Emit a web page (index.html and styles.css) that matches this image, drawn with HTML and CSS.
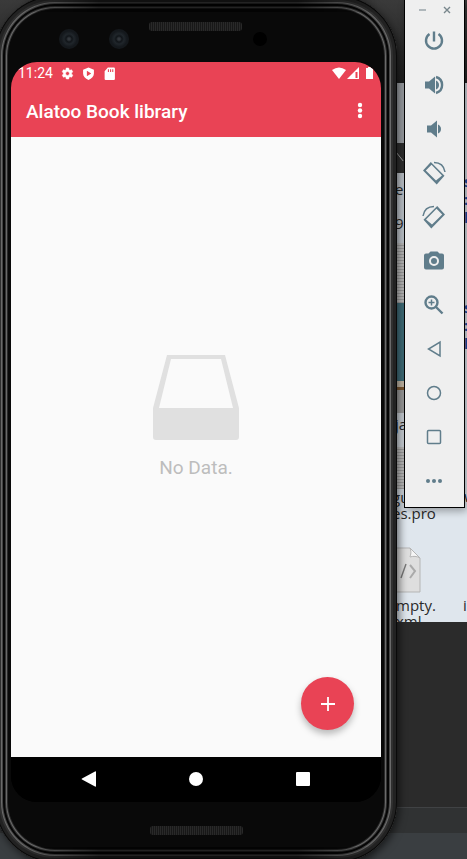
FILE: index.html
```html
<!DOCTYPE html>
<html lang="en">
<head>
<meta charset="utf-8">
<meta name="viewport" content="width=device-width, initial-scale=1">
<title>Alatoo Book library</title>
<link rel="stylesheet" href="styles.css">
</head>
<body>
<div class="desktop">
  <section class="files" aria-label="Files">
    <div class="thumbs">
      <div class="thumb pale"></div>
      <div class="thumb dark"><svg viewBox="0 0 10 30"><path d="M0 10L8 20" stroke="#bbb" fill="none"/></svg></div>
      <div class="thumb names"><span>e</span><span>9</span></div>
      <div class="thumb page"></div>
      <div class="thumb teal"></div>
      <div class="thumb wood"></div>
      <div class="thumb names low"><span>ja</span></div>
      <div class="thumb page"></div>
    </div>
    <p class="name">gu<br>es.pro</p>
    <svg class="doc" viewBox="0 0 28 46"><path d="M0 1H17L27 11V45H0Z" fill="#dedede" stroke="#b5b5b5"/><path d="M17 1C19 6 17 9 17 10C20 9 24 9 27 11Z" fill="#f6f6f6" stroke="#b5b5b5"/><path d="M13 17L8 31" stroke="#777" stroke-width="1.4"/><path d="M17 18L22 24L17 31" fill="none" stroke="#aaa" stroke-width="2"/></svg>
    <p class="name last">mpty.<br>xml</p>
    <div class="edge"><span>s</span><span>:</span><span>l</span></div>
    <div class="edge lower"><span>s</span><span>:</span><span>l</span></div>
    <span class="stray">i</span>
    <span class="stray high">w</span>
  </section>
  <div class="taskbar"></div>
</div>

<main class="phone">
  <div class="body">
    <div class="top">
      <i class="lens"></i><i class="lens"></i><i class="grille"></i><i class="sensor"></i>
    </div>
    <div class="screen">
      <header class="appbar">
        <div class="status">
          <span>11:24</span>
          <svg viewBox="0 0 24 24"><path d="M19.4 13a7 7 0 0 0 0-2l2.1-1.6c.2-.2.3-.5.1-.7l-2-3.400c-.1-.2-.4-.3-.6-.2l-2.500 1a7 7 0 0 0-1.700-1l-.4-2.600a.5.5 0 0 0-.5-.5h-4c-.2 0-.4.2-.5.4L9.100 5.100a8 8 0 0 0-1.600 1L5 5.100c-.3-.1-.5 0-.7.2l-2 3.400c-.1.3 0 .5.200.700L4.600 11a7 7 0 0 0 0 2l-2.100 1.600c-.2.2-.3.5-.1.700l2 3.400c.1.200.4.300.6.200l2.500-1a7 7 0 0 0 1.700 1l.3 2.600c.1.300.3.500.500.500h4c.3 0 .5-.2.500-.4l.4-2.700a8 8 0 0 0 1.700-1l2.500 1c.2.100.500 0 .600-.2l2-3.400c.1-.2.100-.5-.1-.7ZM12 15.600a3.600 3.600 0 1 1 0-7.200 3.600 3.600 0 0 1 0 7.200Z" fill="#fff" stroke="#fff" fill-rule="evenodd"/></svg>
          <svg viewBox="0 0 24 24"><path d="M12 1L2 5V12C2 17 6 21.500 12 24C18 21.500 22 17 22 12V5ZM9 7L17 12L9 17Z" fill="#fff" fill-rule="evenodd"/></svg>
          <svg viewBox="0 0 24 24"><path d="M9 1H20Q22 1 22 3V22Q22 24 20 24H5Q3 24 3 22V8ZM9 4V9H11V4ZM13 4V9H15V4ZM17 4V9H19V4Z" fill="#fff" fill-rule="evenodd"/></svg>
          <svg class="signals" viewBox="0 0 42 14"><path d="M0 4Q7-1 14 4L7 13Z" fill="#fff"/><path d="M27 1V13H15Z" fill="#fff"/><path d="M23.500 6H25.500V12H23.500Z" fill="#e94355"/><path d="M36 1H39V2H41V13H34V2H36Z" fill="#fff"/></svg>
        </div>
        <div class="titlebar">
          <h1>Alatoo Book library</h1>
          <button class="more" aria-label="More options"><svg viewBox="0 0 6 18"><circle cx="3" cy="3" r="2.200"/><circle cx="3" cy="8.500" r="2.200"/><circle cx="3" cy="14" r="2.200"/></svg></button>
        </div>
      </header>
      <div class="content">
        <div class="empty">
          <svg viewBox="0 0 86 86"><path d="M0 54L14 1H72L86 54V83Q86 86 83 86H3Q0 86 0 83ZM6 54H80L68 5H18Z" fill="#e0e0e0" fill-rule="evenodd"/></svg>
          <p>No Data.</p>
        </div>
        <button class="fab" aria-label="Add book"><svg viewBox="0 0 14 14"><path d="M7 0V14M0 7H14" stroke="#fff" stroke-width="1.800"/></svg></button>
      </div>
      <nav class="nav">
        <button aria-label="Back"><svg viewBox="0 0 16 16"><path d="M15 1V15Q15 16 14 15.500L1 8.500Q0 8 1 7.500L14 .5Q15 0 15 1Z"/></svg></button>
        <button aria-label="Home"><svg viewBox="0 0 16 16"><circle cx="8" cy="8" r="7"/></svg></button>
        <button aria-label="Overview"><svg viewBox="0 0 16 16"><rect x="1" y="1" width="14" height="14" rx="1"/></svg></button>
      </nav>
    </div>
    <div class="chin"><i class="grille"></i></div>
  </div>
</main>

<aside class="tools" aria-label="Emulator controls">
  <div class="winbtns">
    <button aria-label="Minimize"><svg viewBox="0 0 10 10"><path d="M1 5H8" stroke="#9aa5aa" stroke-width="1.500"/></svg></button>
    <button aria-label="Close"><svg viewBox="0 0 10 10"><path d="M2 2L8 8M8 2L2 8" stroke="#78868c" stroke-width="1.400"/></svg></button>
  </div>
  <button class="tool" aria-label="Power"><svg viewBox="0 0 24 24"><path class="line" d="M7.500 5A8 8 0 1 0 16.500 5M12 2.500V12.500"/></svg></button>
  <button class="tool" aria-label="Volume up"><svg viewBox="0 0 24 24"><path d="M3 8.500V15.500H7L13 20.500V3.500L7 8.500ZM14 7.500Q17 9 17 12T14 16.500Z"/><path class="line" d="M14 4A8.300 8.300 0 0 1 14 20"/></svg></button>
  <button class="tool" aria-label="Volume down"><svg viewBox="0 0 24 24"><path d="M5 8.500V15.500H9L15 20.500V3.500L9 8.500ZM16 7.500Q19 9 19 12T16 16.500Z"/></svg></button>
  <button class="tool" aria-label="Rotate left"><svg viewBox="0 0 24 24"><path d="M8.800 1L22.500 14.700L14.700 23.500L1 9.500ZM9.500 3.800L3.800 9.500L14 19.500L20 14.500Z" fill-rule="evenodd"/><path class="thin" d="M12 1.500Q21.500 1.500 23 11"/></svg></button>
  <button class="tool" aria-label="Rotate right"><svg viewBox="0 0 24 24"><path d="M15.200 1L1.500 14.700L9.300 23.500L23 9.500ZM14.500 3.800L20.200 9.500L10 19.500L4 14.500Z" fill-rule="evenodd"/><path class="thin" d="M12 1.500Q2.500 1.500 1 11"/></svg></button>
  <button class="tool" aria-label="Take screenshot"><svg viewBox="0 0 24 24"><path d="M8.500 2.500H15.500L17.500 4.500H20Q22 4.500 22 6.500V18.500Q22 20.500 20 20.500H4Q2 20.500 2 18.500V6.500Q2 4.500 4 4.500H6.500ZM12 7A5 5 0 1 0 12 17A5 5 0 1 0 12 7ZM12 9A3 3 0 1 1 12 15A3 3 0 1 1 12 9Z" fill-rule="evenodd"/></svg></button>
  <button class="tool" aria-label="Zoom"><svg viewBox="0 0 24 24"><circle class="line" cx="9.500" cy="9.500" r="6"/><path class="line" d="M14 14L20.500 20.500"/><path class="thin" d="M9.500 6.500V12.500M6.500 9.500H12.500"/></svg></button>
  <button class="tool" aria-label="Back"><svg viewBox="0 0 24 24"><path class="thin" d="M18 5V19L6.500 12Z"/></svg></button>
  <button class="tool" aria-label="Home"><svg viewBox="0 0 24 24"><circle class="thin" cx="12" cy="12" r="6.500"/></svg></button>
  <button class="tool" aria-label="Overview"><svg viewBox="0 0 24 24"><rect class="thin" x="5.500" y="5.500" width="13" height="13" rx="1"/></svg></button>
  <button class="tool" aria-label="More"><svg viewBox="0 0 24 24"><circle cx="6" cy="12" r="2"/><circle cx="12" cy="12" r="2"/><circle cx="18" cy="12" r="2"/></svg></button>
</aside>
</body>
</html>
```
FILE: styles.css
```css
* { box-sizing: border-box; }
body {
  margin: 0;
  min-height: 100vh;
  display: flex;
  align-items: flex-start;
  position: relative;
  overflow: hidden;
  background: #2b2b2b;
  font-family: Roboto, sans-serif;
}
button { border: 0; padding: 0; background: none; display: grid; place-items: center; }
svg { display: block; }
i { display: block; }

/* Desktop behind the windows */
.desktop {
  position: absolute;
  inset: 0;
  display: flex;
  flex-direction: column;
  padding-top: 83px;
  background: linear-gradient(#3a3a3a, #222 83px, #2b2b2b 84px);
}
.files {
  position: relative;
  height: 539px;
  overflow: hidden;
  padding-left: 392px;
  background: linear-gradient(#cbd1d8, #dfe6ed 430px);
  color: #2a2a2a;
  font: 15px/16px "Open Sans", sans-serif;
}
.thumbs { width: 13px; height: 406px; display: grid; grid-template-rows: 60px 30px 70px 60px 78px 32px 34px 42px; }
.thumb { overflow: hidden; }
.thumb.pale { background: #a9adb2; }
.thumb.dark { background: #333; padding-left: 4px; }
.thumb.names { display: flex; flex-direction: column; gap: 18px; padding: 8px 0 0 3px; }
.thumb.low { padding-top: 3px; }
.thumb.page { background: repeating-linear-gradient(#ccc 0 2px, #aaa 2px 3px); }
.thumb.teal { background: #467784; }
.thumb.wood { background: linear-gradient(#d5c8b5 6px, #865e35 6px 9px, #aaa 9px); }
.name { margin: 0; }
.doc { width: 28px; height: 46px; margin: 26px 0 0 1px; }
.last { margin-top: 4px; padding-left: 4px; }
.edge { position: absolute; right: 0; top: 90px; width: 3px; overflow: hidden; display: grid; gap: 2px; color: #1b4ba0; font-weight: 700; }
.edge.lower { top: 216px; }
.stray { position: absolute; right: 0; top: 514px; width: 4px; overflow: hidden; }
.stray.high { top: 405px; width: 3px; }
.taskbar { margin-top: auto; height: 52px; border-top: 1px solid #404244; background: linear-gradient(#303233 25px, #3a3e41 25px); }

/* Emulated handset */
.phone {
  position: relative;
  flex: 1;
  min-width: 0;
  height: 100vh;
  min-height: 600px;
  margin: 0 70px 0 0;
  padding: 2px 16px 4px 11px;
}
.phone::before {
  content: "";
  position: absolute;
  inset: -4px 0 -3px -5px;
  border-radius: 60px;
  background: #090909;
  box-shadow:
    inset 0 0 0 1px #0a0a0a,
    inset 0 0 0 4px #222,
    inset 0 0 0 6px #303030,
    inset 0 0 0 7px #6a6a6a,
    inset 0 0 0 8px #444,
    inset 0 0 0 10px #050505,
    inset 0 0 0 11px #333,
    inset 0 0 0 12px #6a6a6a,
    inset 0 0 0 13px #2a2a2a,
    2px 3px 9px #0009;
}
/* The rim catches less light along the top and bottom */
.phone::after {
  content: "";
  position: absolute;
  inset: 0 20px;
  background: linear-gradient(#000a 12px, #0000 12px calc(100% - 12px), #000a calc(100% - 12px));
  mask-image: linear-gradient(90deg, transparent, #000 80px calc(100% - 80px), transparent);
  pointer-events: none;
}
.body {
  position: relative;
  height: 100%;
  display: flex;
  flex-direction: column;
}
.top { position: relative; height: 60px; flex: none; }
.top > i { position: absolute; }
.lens { width: 20px; height: 20px; border-radius: 50%; top: 27px; left: 48px; background: radial-gradient(#33383d 1px, #111519 3px, #20262b 5px, #14181c 8px); }
.lens + .lens { left: 98px; }
.grille { width: 93px; height: 9px; border-radius: 3px; background: repeating-linear-gradient(90deg, #292929 0 1px, #181818 1px 2px); }
.top .grille { left: calc(50% - 47px); top: 20px; }
.sensor { width: 14px; height: 14px; border-radius: 50%; left: 242px; top: 30px; background: #000; }
.screen { flex: 1; min-height: 0; display: flex; flex-direction: column; border-radius: 26px; overflow: hidden; background: #000; }
.appbar { position: relative; height: 75px; background: #e94355; color: #fff; box-shadow: 0 1px 1px #0003; }
.status { height: 22px; display: flex; align-items: center; gap: 8px; padding: 0 7px; font-size: 14px; }
.status > svg { width: 13px; height: 13px; }
.status > .signals { width: 42px; height: 14px; margin-left: auto; }
.titlebar { display: flex; align-items: center; justify-content: space-between; padding: 0 15px; height: 54px; }
h1 { margin: 0; font-size: 19px; font-weight: 500; }
.more { width: 12px; height: 32px; }
.more svg { width: 6px; height: 18px; fill: #fff; }
.content { position: relative; flex: 1; display: grid; justify-items: center; align-content: center; padding-bottom: 61px; background: #fafafa; }
.empty { display: grid; justify-items: center; gap: 16px; color: #bdbdbd; }
.empty svg { width: 86px; height: 86px; }
.empty p { margin: 0; font-size: 19px; line-height: 24px; }
.fab { position: absolute; right: 27px; bottom: 27px; width: 53px; height: 53px; border-radius: 50%; background: #e94355; box-shadow: 0 4px 7px #0004; }
.fab svg { width: 14px; height: 14px; }
.nav { height: 45px; display: grid; grid-template-columns: repeat(3, 1fr); place-items: center; padding: 0 25px 1px 24px; background: #000; }
.nav button { width: 40px; height: 40px; }
.nav svg { width: 16px; height: 16px; fill: #fff; }
.chin { height: 53px; flex: none; display: grid; place-items: center; padding-top: 3px; }

/* Emulator control strip */
.tools {
  position: absolute;
  top: 0;
  right: 2px;
  width: 61px;
  padding: 0 2px 4px 0;
  border: 1px solid #000;
  border-top: 0;
  background: #efefef;
  box-shadow: 2px 3px 8px #0005;
}
.winbtns { height: 19px; display: flex; justify-content: center; gap: 14px; padding-left: 2px; }
.winbtns svg { width: 10px; height: 10px; }
.tool { width: 100%; height: 44px; }
.tool svg { width: 24px; height: 24px; fill: #607d8b; }
.tool .line, .tool .thin { fill: none; stroke: #607d8b; stroke-width: 2; }
.tool .line { stroke-width: 2.400; }
.tool .thin { stroke-width: 1.500; }
```
